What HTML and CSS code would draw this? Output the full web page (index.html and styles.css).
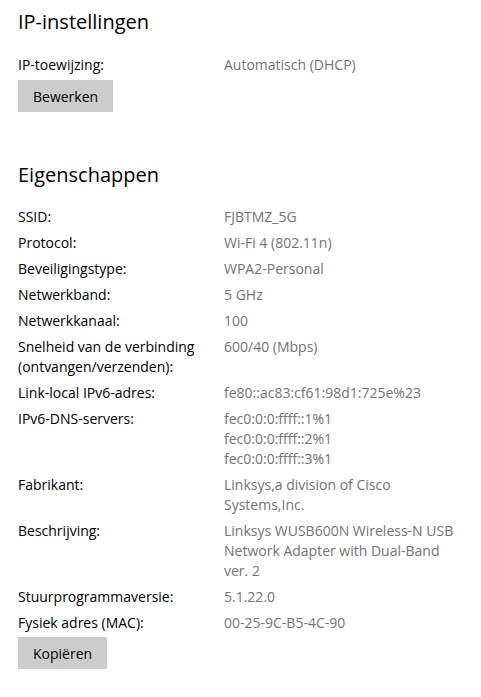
FILE: index.html
```html
<!DOCTYPE html>
<html lang="nl">
<head>
  <meta charset="UTF-8">
  <meta name="viewport" content="width=device-width, initial-scale=1.0">
  <title>Wi-Fi eigenschappen</title>
  <link rel="stylesheet" href="styles.css">
</head>
<body>
  <div class="page">

    <section class="section">
      <h2>IP-instellingen</h2>
      <dl class="props">
        <div class="prop">
          <dt>IP-toewijzing:</dt>
          <dd>Automatisch (DHCP)</dd>
        </div>
      </dl>
      <button class="btn">Bewerken</button>
    </section>

    <section class="section section-props">
      <h2>Eigenschappen</h2>
      <dl class="props">
        <div class="prop"><dt>SSID:</dt><dd>FJBTMZ_5G</dd></div>
        <div class="prop"><dt>Protocol:</dt><dd>Wi-Fi 4 (802.11n)</dd></div>
        <div class="prop"><dt>Beveiligingstype:</dt><dd>WPA2-Personal</dd></div>
        <div class="prop"><dt>Netwerkband:</dt><dd>5 GHz</dd></div>
        <div class="prop"><dt>Netwerkkanaal:</dt><dd>100</dd></div>
        <div class="prop"><dt>Snelheid van de verbinding (ontvangen/verzenden):</dt><dd>600/40 (Mbps)</dd></div>
        <div class="prop"><dt>Link-local IPv6-adres:</dt><dd>fe80::ac83:cf61:98d1:725e%23</dd></div>
        <div class="prop">
          <dt>IPv6-DNS-servers:</dt>
          <dd>fec0:0:0:ffff::1%1<br>fec0:0:0:ffff::2%1<br>fec0:0:0:ffff::3%1</dd>
        </div>
        <div class="prop"><dt>Fabrikant:</dt><dd>Linksys,a division of Cisco Systems,Inc.</dd></div>
        <div class="prop"><dt>Beschrijving:</dt><dd>Linksys WUSB600N Wireless-N USB Network Adapter with Dual-Band ver. 2</dd></div>
        <div class="prop"><dt>Stuurprogrammaversie:</dt><dd>5.1.22.0</dd></div>
        <div class="prop"><dt>Fysiek adres (MAC):</dt><dd>00-25-9C-B5-4C-90</dd></div>
      </dl>
      <button class="btn">Kopiëren</button>
    </section>

  </div>
</body>
</html>
```

FILE: styles.css
```css
:root {
  --text-color: #000;
  --value-color: #737373;
  --btn-bg: #cccccc;
}

body {
  margin: 0;
  padding: 0;
  background-color: #fff;
  color: var(--text-color);
  font-family: 'Segoe UI', 'Open Sans', sans-serif;
  font-size: 14px;
  line-height: 20px;
}

.page {
  padding: 8px 18px 0 18px;
}

.section h2 {
  margin: 0;
  font-size: 20px;
  line-height: 28px;
  font-weight: normal;
}

.section-props {
  margin-top: 49px;
}

.props {
  margin: 19px 0 0 0;
  display: flex;
  flex-direction: column;
  gap: 6px;
}

.section-props .props {
  margin-top: 18px;
}

.prop {
  display: flex;
}

.prop dt {
  width: 206px;
  padding-right: 12px;
  box-sizing: border-box;
}

.prop dd {
  margin: 0;
  width: 236px;
  color: var(--value-color);
}

.btn {
  display: block;
  margin-top: 5px;
  height: 32px;
  padding: 0 15px;
  border: none;
  background-color: var(--btn-bg);
  color: var(--text-color);
  font-family: inherit;
  font-size: 14px;
}

.section-props .btn {
  margin-top: 4px;
}
```
